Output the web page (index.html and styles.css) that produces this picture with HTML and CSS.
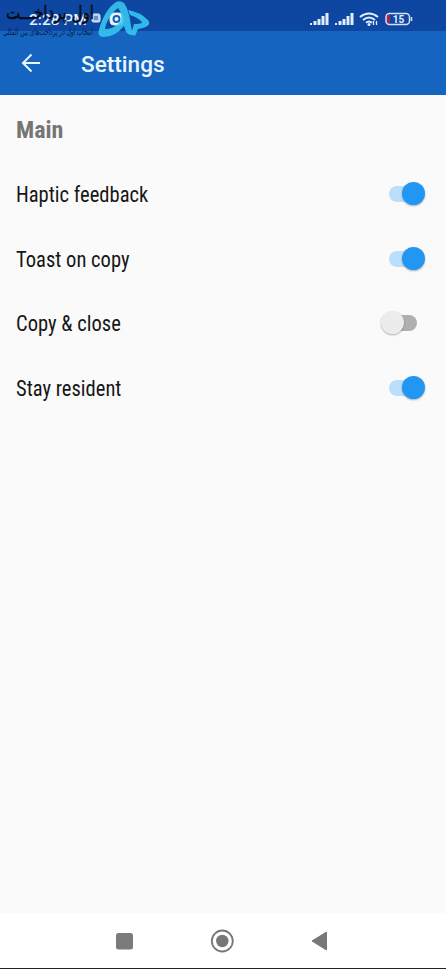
FILE: index.html
```html
<!DOCTYPE html>
<html lang="en">
<head>
<meta charset="utf-8">
<title>Settings</title>
<link rel="stylesheet" href="styles.css">
</head>
<body>
<div class="screen">
  <header class="status">
    <div class="clock"><span class="time">2:28 PM</span>
      <svg width="34" height="16" viewBox="0 0 34 16" fill="none" stroke="#dce9fb"><rect x="1" y="4" width="8" height="8" rx="1.5" fill="#b4cfee"/><path d="M3 7h4M3 9h4" stroke="#1855a4"/><rect x="19" y="3" width="13" height="12" rx="4" fill="#e9f5ff"/><circle cx="25.500" cy="9" r="3" stroke="#1460bd" stroke-width="2"/></svg>
    </div>
    <svg class="signals" width="106" height="18" viewBox="0 0 106 18">
      <g fill="#e0efff">
        <path d="M1 13h2v2H1zM4.500 11h3v4h-3zM8.500 9h3v6h-3zM12.500 6h3v9h-3zM16.500 3h3v12h-3z"/>
        <path d="M26 13h2v2h-2zM29.500 11h3v4h-3zM33.500 9h3v6h-3zM37.500 6h3v9h-3zM41.500 3h3v12h-3z"/>
      </g>
      <g fill="none" stroke="#e0efff" stroke-width="2"><path d="M51 7q9-7 18 0M54 10q6-5 12 0M57 12.700q3-2.500 6 0"/><path d="M64.500 11v4M67.500 11v4" stroke-width="1.300"/></g>
      <circle cx="60" cy="14.500" r="1.500" fill="#e0efff"/>
      <rect x="77" y="3.500" width="23.500" height="11" rx="3.500" fill="#1046a0" stroke="#d2e2fb" stroke-width="1.500"/>
      <path d="M78 5h3v8h-3z" fill="#b8204a"/><path d="M102.500 7v4" stroke="#d2e2fb" stroke-width="1.500"/>
      <text class="level" x="89.500" y="12.500" text-anchor="middle">15</text>
    </svg>
    <div class="brand">
      <svg width="97" height="40" viewBox="0 0 97 40" direction="rtl" lang="fa"><text class="name" x="94" y="19" textLength="88" lengthAdjust="spacingAndGlyphs">اول پرداخـــت</text><text class="tagline" x="93" y="35" textLength="90" lengthAdjust="spacingAndGlyphs">انتخاب اول در پرداخت‌های بین المللی</text></svg>
      <svg class="mark" width="54" height="40" viewBox="0 0 54 40" fill="#36c7f2" fill-rule="evenodd"><path d="M19 2Q23 0 27 3C31 9 33 17 34 26L36 35Q32 36 29 32L27 26Q18 37 7 37Q0 37 2 30C5 18 11 7 19 2ZM21 8C15 12 9 22 8 29Q16 30 24 21Q25 13 21 8Z"/><path d="M31 10Q43 12 51 20Q55 25 46 28L41 29L38 36L34 34L37 24Q45 24 45 22Q40 17 33 15Z"/></svg>
    </div>
  </header>
  <div class="appbar">
    <svg class="back" width="20" height="20" viewBox="0 0 20 20" fill="none" stroke="#e9f5ff" stroke-width="2"><path d="M19 10H2M10.500 1.500 2 10l8.500 8.500"/></svg>
    <h1>Settings</h1>
  </div>
  <main>
    <h2><span class="narrow">Main</span></h2>
    <div class="row"><span class="narrow">Haptic feedback</span><i class="switch on"></i></div>
    <div class="row"><span class="narrow">Toast on copy</span><i class="switch on"></i></div>
    <div class="row"><span class="narrow">Copy &amp; close</span><i class="switch"></i></div>
    <div class="row"><span class="narrow">Stay resident</span><i class="switch on"></i></div>
  </main>
  <nav>
    <svg width="24" height="24" viewBox="0 0 24 24"><rect x="4" y="4" width="17" height="16.500" rx="2.500" fill="#7b7b7b"/></svg>
    <svg width="24" height="24" viewBox="0 0 24 24"><circle cx="12.300" cy="12" r="10.500" fill="none" stroke="#777" stroke-width="1.800"/><circle cx="12.300" cy="12" r="6.200" fill="#777"/></svg>
    <svg width="24" height="24" viewBox="0 0 24 24"><path d="M4 12 18.500 3v18z" fill="#777" stroke="#777" stroke-linejoin="round"/></svg>
  </nav>
</div>
</body>
</html>
```
FILE: styles.css
```css
* { box-sizing: border-box; }
body { margin: 0; font-family: Roboto, sans-serif; }
.screen { width: 446px; height: 969px; display: flex; flex-direction: column; background: #fafafa; border-bottom: 1px solid #1b252b; }
.status { position: relative; flex: none; height: 31px; background: #0d47a1; display: flex; justify-content: space-between; padding: 10px 31px 0 29px; }
.clock { display: flex; gap: 4px; }
.time { color: #e4efff; font-size: 15.5px; line-height: 20px; font-weight: 500; white-space: nowrap; }
.level { font: 700 10px Roboto, sans-serif; fill: #e0efff; }
.brand { position: absolute; left: 0; top: 0; display: flex; z-index: 1; }
.brand svg { display: block; overflow: visible; }
.mark { opacity: .88; }
.name { font: 400 19px "DejaVu Sans", sans-serif; fill: #070c20; stroke: #070c20; stroke-width: .5px; }
.tagline { font: 9px "DejaVu Sans", sans-serif; fill: #071c46; }
.appbar { flex: none; height: 64px; background: #1565c0; display: flex; align-items: center; padding: 0 21px; }
.back { margin-right: 40px; }
h1 { margin: 4px 0 0; font-size: 22.6px; line-height: 28px; font-weight: 500; color: #e9f5ff; }
main { flex: 1; padding: 0 20px 0 16px; }
h2 { margin: 0; height: 67px; padding-top: 2px; display: flex; align-items: center; font-size: 24px; color: #757575; }
.row { height: 64.5px; display: flex; align-items: center; justify-content: space-between; font-size: 22px; color: #161616; }
.narrow { font-stretch: 75%; }
.row .narrow { margin-top: 1px; transform: scaleX(.935); transform-origin: left; }
.switch { position: relative; width: 46px; height: 24px; display: block; }
.switch::before { content: ""; position: absolute; left: 9px; top: 4px; width: 28px; height: 16px; border-radius: 8px; background: #b0b0b0; }
.switch::after { content: ""; position: absolute; left: 1px; top: 0; width: 23px; height: 23px; border-radius: 50%; background: #ececec; box-shadow: 0 1px 2px rgba(0,0,0,.3); }
.switch.on::before { background: #bbdefb; }
.switch.on::after { left: 22px; background: #2196f3; }
nav { flex: none; height: 55px; background: #fff; display: flex; justify-content: space-between; align-items: center; padding: 0 114px 0 112px; }
```
